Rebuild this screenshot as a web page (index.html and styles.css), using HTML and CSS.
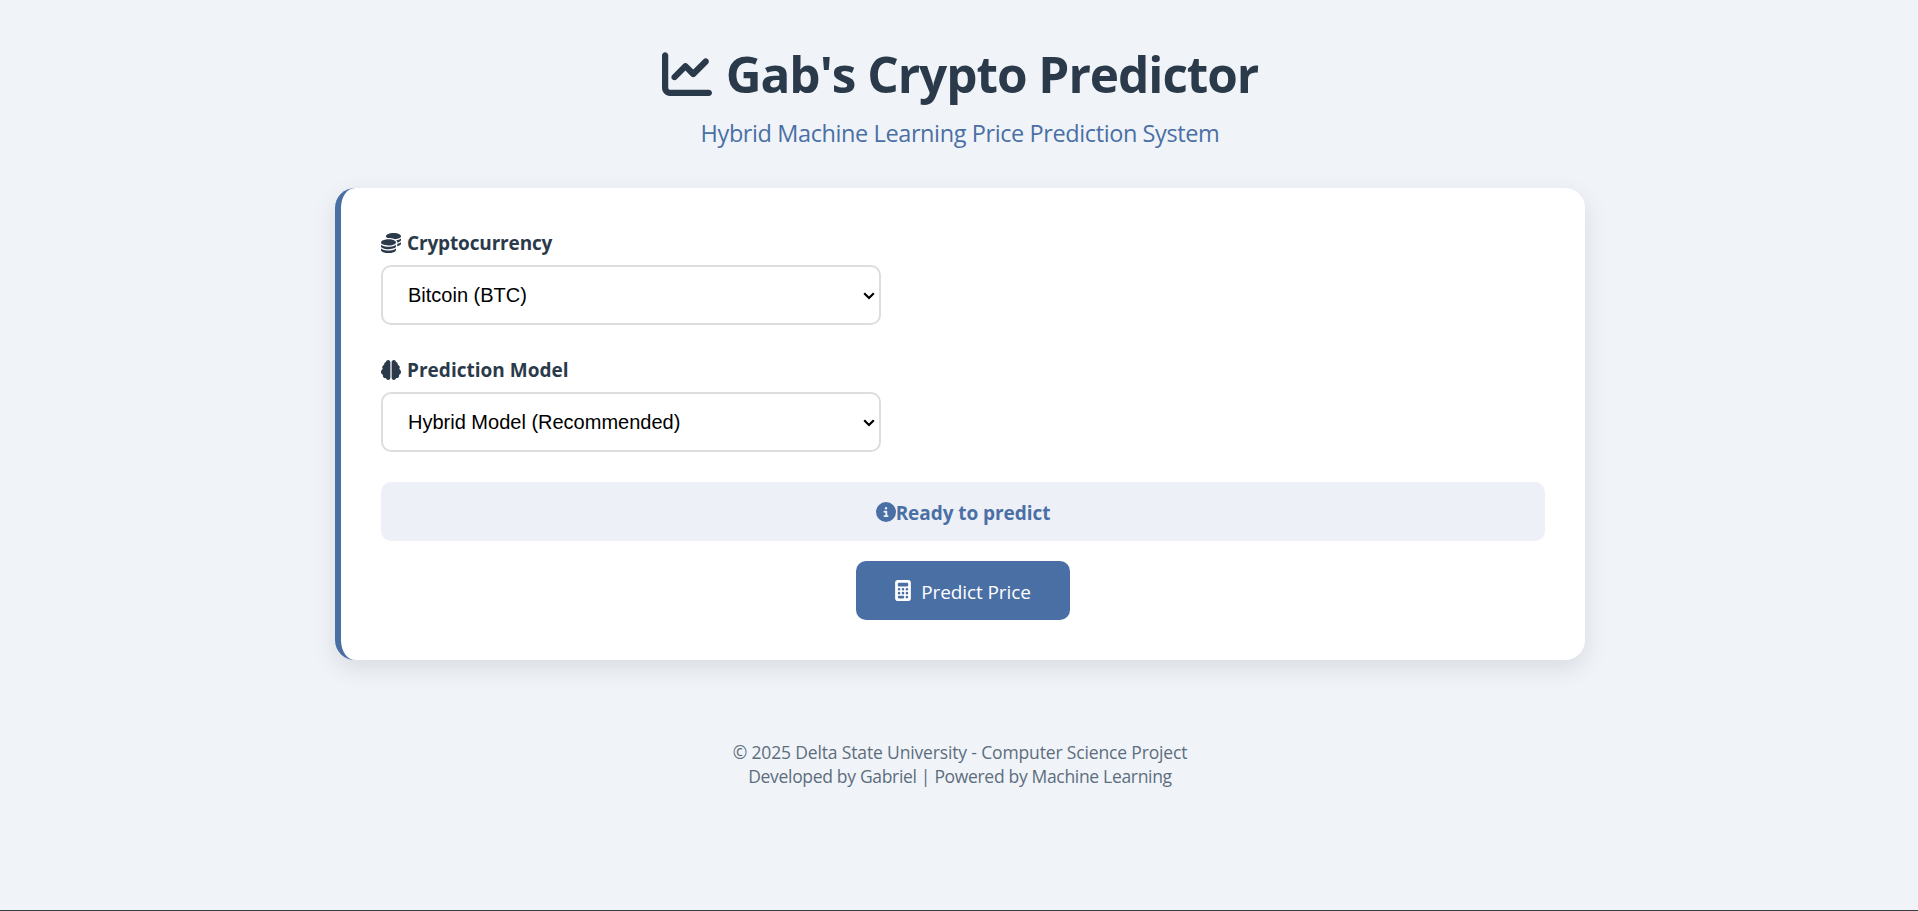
FILE: index.html
```html
<!DOCTYPE html>
<html lang="en">
<head>
<meta charset="utf-8">
<title>Gab's Crypto Predictor</title>
<link rel="stylesheet" href="styles.css">
</head>
<body>
<div class="container">
  <header class="header">
    <h1 class="title">
      <svg class="icon title-icon" viewBox="0 0 512 512"><path d="M64 64c0-17.700-14.300-32-32-32S0 46.300 0 64V400c0 44.200 35.800 80 80 80H480c17.700 0 32-14.300 32-32s-14.300-32-32-32H80c-8.800 0-16-7.200-16-16V64zm406.600 86.600c12.500-12.500 12.500-32.800 0-45.300s-32.800-12.500-45.300 0L320 210.700l-57.400-57.400c-12.500-12.500-32.800-12.500-45.300 0l-112 112c-12.500 12.500-12.500 32.800 0 45.300s32.800 12.500 45.300 0L240 221.300l57.400 57.400c12.500 12.500 32.800 12.500 45.300 0l128-128z"/></svg>
      <span class="title-text">Gab's Crypto Predictor</span>
    </h1>
    <p class="subtitle">Hybrid Machine Learning Price Prediction System</p>
  </header>

  <main class="card">
    <div class="field">
      <label class="label" for="crypto">
        <svg class="icon" viewBox="0 0 512 512"><path d="M512 80c0 18-14.3 34.6-38.4 48c-29.1 16.1-72.5 27.500-122.300 30.900c-3.700-1.800-7.400-3.500-11.300-5C300.600 137.400 248.200 128 192 128c-8.300 0-16.400 .2-24.500 .6l-1.100-.6C142.300 114.600 128 98 128 80c0-44.200 86-80 192-80S512 35.800 512 80zM160.700 161.100c10.200-.7 20.700-1.100 31.300-1.100c62.200 0 117.400 12.300 152.500 31.400C369.300 204.900 384 221.700 384 240c0 4-.7 7.900-2.100 11.700c-4.600 13.200-17 25.300-35 35.500c-.1 .1-.3 .1-.4 .2c-.3 .2-.6 .3-.9 .5c-35 19.400-90.800 32-153.600 32c-59.600 0-112.900-11.300-148.200-29.100c-1.900-.9-3.700-1.900-5.500-2.900C14.300 274.600 0 258 0 240c0-34.800 53.400-64.500 128-75.400c10.500-1.500 21.400-2.700 32.700-3.500zM416 240c0-21.900-10.600-39.900-24.100-53.400c28.300-4.400 54.200-11.400 76.200-20.500c16.300-6.800 31.500-15.200 43.900-25.500V176c0 19.300-16.500 37.100-43.800 50.900c-14.600 7.400-32.400 13.700-52.400 18.500c.1-1.800 .2-3.500 .2-5.300zm-32 96c0 18-14.300 34.600-38.400 48c-1.800 1-3.600 1.900-5.500 2.900C304.900 404.700 251.600 416 192 416c-62.800 0-118.600-12.600-153.600-32C14.300 370.600 0 354 0 336V300.600c12.500 10.300 27.600 18.700 43.900 25.500C83.400 342.600 135.800 352 192 352s108.600-9.400 148.100-25.900c7.800-3.200 15.300-6.900 22.400-10.900c6.100-3.400 11.800-7.200 17.200-11.200c1.500-1.100 2.900-2.300 4.300-3.400V336zm32 0V278.100c19-4.200 36.500-9.500 52.100-16c16.300-6.800 31.500-15.200 43.900-25.500V272c0 10.500-5 21-14.900 30.900c-16.300 16.300-45 29.700-81.300 38.400c.1-1.700 .2-3.500 .2-5.300zM192 448c56.200 0 108.600-9.400 148.100-25.900c16.300-6.800 31.500-15.200 43.900-25.500V432c0 44.200-86 80-192 80S0 476.200 0 432V396.600c12.500 10.300 27.600 18.700 43.900 25.500C83.400 438.600 135.800 448 192 448z"/></svg>
        <span class="label-text">Cryptocurrency</span>
      </label>
      <div class="select-wrap">
        <select class="select" id="crypto"><option>Bitcoin (BTC)</option></select>
        <svg class="arrow" viewBox="0 0 12 8"><path d="M1.200 1.300L6 6L10.800 1.300"/></svg>
      </div>
    </div>
    <div class="field">
      <label class="label" for="model">
        <svg class="icon" viewBox="0 0 512 512"><path d="M184 0c30.900 0 56 25.100 56 56V456c0 30.900-25.100 56-56 56c-28.900 0-52.700-21.900-55.700-50.100c-5.200 1.400-10.700 2.100-16.300 2.100c-35.300 0-64-28.700-64-64c0-7.400 1.300-14.600 3.600-21.200C21.400 367.400 0 338.200 0 304c0-31.900 18.700-59.500 45.800-72.300C37.100 220.800 32 207 32 192c0-30.700 21.600-56.300 50.400-62.600C80.800 123.900 80 118 80 112c0-29.900 20.600-55.100 48.300-62.100C131.300 21.900 155.100 0 184 0zM328 0c28.900 0 52.600 21.900 55.700 49.900c27.800 7 48.300 32.100 48.300 62.100c0 6-.8 11.900-2.400 17.400c28.800 6.200 50.400 31.900 50.400 62.600c0 15-5.100 28.800-13.800 39.700C493.300 244.500 512 272.100 512 304c0 34.200-21.400 63.400-51.600 74.800c2.300 6.600 3.600 13.800 3.600 21.200c0 35.300-28.700 64-64 64c-5.600 0-11.100-.7-16.300-2.100c-3 28.200-26.800 50.100-55.700 50.100c-30.900 0-56-25.100-56-56V56c0-30.900 25.100-56 56-56z"/></svg>
        <span class="label-text model-text">Prediction Model</span>
      </label>
      <div class="select-wrap">
        <select class="select" id="model"><option>Hybrid Model (Recommended)</option></select>
        <svg class="arrow" viewBox="0 0 12 8"><path d="M1.200 1.300L6 6L10.800 1.300"/></svg>
      </div>
    </div>

    <div class="status">
      <svg class="icon" viewBox="0 0 512 512"><path d="M256 512A256 256 0 1 0 256 0a256 256 0 1 0 0 512zM216 336h24V272H216c-13.300 0-24-10.700-24-24s10.700-24 24-24h48c13.300 0 24 10.700 24 24v88h8c13.300 0 24 10.700 24 24s-10.700 24-24 24H216c-13.300 0-24-10.700-24-24s10.700-24 24-24zm40-208a32 32 0 1 1 0 64 32 32 0 1 1 0-64z"/></svg>
      <span class="status-text">Ready to predict</span>
    </div>

    <button class="button" type="button">
      <svg class="icon button-icon" viewBox="0 0 384 512"><path fill-rule="evenodd" d="M64 0C28.700 0 0 28.700 0 64V448c0 35.300 28.700 64 64 64H320c35.300 0 64-28.700 64-64V64c0-35.300-28.700-64-64-64H64zM96 64H288c17.700 0 32 14.300 32 32v32c0 17.700-14.300 32-32 32H96c-17.700 0-32-14.300-32-32V96c0-17.700 14.300-32 32-32zM64 224a32 32 0 1 1 64 0a32 32 0 1 1-64 0zM160 224a32 32 0 1 1 64 0a32 32 0 1 1-64 0zM256 224a32 32 0 1 1 64 0a32 32 0 1 1-64 0zM64 320a32 32 0 1 1 64 0a32 32 0 1 1-64 0zM160 320a32 32 0 1 1 64 0a32 32 0 1 1-64 0zM256 320a32 32 0 1 1 64 0a32 32 0 1 1-64 0zM96 384h96a32 32 0 1 1 0 64H96a32 32 0 1 1 0-64zM256 416a32 32 0 1 1 64 0a32 32 0 1 1-64 0z"/></svg>
      <span class="button-text">Predict Price</span>
    </button>
  </main>

  <footer class="footer">
    <p class="footer-line">© 2025 Delta State University - Computer Science Project</p>
    <p class="footer-line credits">Developed by Gabriel | Powered by Machine Learning</p>
  </footer>
</div>
</body>
</html>
```
FILE: styles.css
```css
* { box-sizing: border-box; margin: 0; padding: 0; }

body {
  height: 911px;
  overflow: hidden;
  background: #f0f4f8;
  border-bottom: 1px solid #3b3e43;
  font-family: "Segoe UI", "Open Sans", "Noto Sans", sans-serif;
}

.container {
  width: 1250px;
  margin-left: 335px;
  padding-top: 40px;
}

.icon { display: block; flex: none; width: 20px; height: 20px; fill: currentColor; }

.header { height: 148px; text-align: center; color: #2b3a4a; }

.title {
  display: flex;
  align-items: center;
  justify-content: center;
  gap: 14px;
  height: 70px;
  font-size: 49.500px;
  font-weight: 700;
  white-space: nowrap;
}
.title-icon { width: 50px; height: 50px; margin-top: -2px; }
.title-text { margin-top: -2px; letter-spacing: -1.040px; }

.subtitle {
  margin-top: 6px;
  font-size: 23.500px;
  line-height: 34px;
  letter-spacing: -0.400px;
  color: #4a6fa5;
}

.card {
  display: flex;
  flex-direction: column;
  height: 472px;
  padding: 40px;
  background: #fff;
  border-left: 6px solid #4a6fa5;
  border-radius: 20px;
  box-shadow: 0 8px 25px rgba(0, 0, 0, 0.100);
}

.field { height: 127px; }

.label {
  display: flex;
  align-items: center;
  gap: 6px;
  height: 29px;
  margin-bottom: 8px;
  font-size: 19px;
  font-weight: 700;
  color: #2b3a4a;
}
.label-text { letter-spacing: -0.150px; }
.model-text { letter-spacing: 0.020px; }

.select-wrap { position: relative; width: 500px; height: 60px; }

.select {
  display: block;
  width: 100%;
  height: 100%;
  padding: 0 25px;
  border: 2px solid #ddd;
  border-radius: 10px;
  background: #fff;
  color: #000;
  font: 20px "Liberation Sans", Arial, sans-serif;
  appearance: none;
}

.arrow {
  position: absolute;
  top: 27px;
  right: 6px;
  width: 12px;
  height: 8px;
  fill: none;
  stroke: #000;
  stroke-width: 2.200;
  pointer-events: none;
}

.status {
  display: flex;
  align-items: center;
  justify-content: center;
  height: 59px;
  border-radius: 10px;
  background: #edf0f7;
  color: #4a6fa5;
  font-size: 19px;
  font-weight: 700;
}
.status-text { margin-top: 2px; letter-spacing: -0.060px; }

.button {
  display: flex;
  align-items: center;
  justify-content: center;
  gap: 10px;
  align-self: center;
  width: 214px;
  height: 59px;
  margin-top: 20px;
  border: 0;
  border-radius: 10px;
  background: #4a6fa5;
  color: #fff;
  font: 19px "Segoe UI", "Open Sans", "Noto Sans", sans-serif;
}
.button-icon { width: 16px; height: 21px; }
.button-text { margin-top: 2px; letter-spacing: -0.100px; }

.footer {
  margin-top: 80px;
  text-align: center;
  font-size: 17.500px;
  line-height: 24px;
  color: #5d6d7e;
}
.footer-line { letter-spacing: -0.150px; }
.credits { letter-spacing: -0.320px; }
```
